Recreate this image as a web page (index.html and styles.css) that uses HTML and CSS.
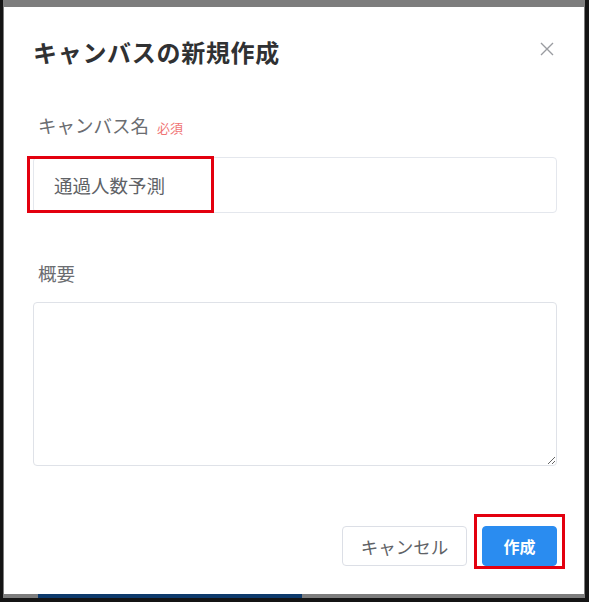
FILE: index.html
```html
<!DOCTYPE html>
<html lang="ja">
<head>
    <meta charset="UTF-8">
    <title>キャンバスの新規作成</title>
    <link rel="stylesheet" href="styles.css">
</head>
<body>
    <div class="screen">
        <div class="backdrop">
            <div class="dialog">
                <div class="dialog-header">
                    <h1>キャンバスの新規作成</h1>
                    <button class="close-btn" aria-label="閉じる">
                        <svg width="14" height="14" viewBox="0 0 14 14">
                            <path d="M1 1 L13 13 M13 1 L1 13" stroke="#9a9ca1" stroke-width="1.4" fill="none"/>
                        </svg>
                    </button>
                </div>

                <div class="field">
                    <label class="field-label">キャンバス名<span class="required">必須</span></label>
                    <div class="input-wrap">
                        <input class="text-input" type="text" value="通過人数予測" readonly>
                        <div class="highlight highlight-input"></div>
                    </div>
                </div>

                <div class="field field-desc">
                    <label class="field-label">概要</label>
                    <textarea class="text-area"></textarea>
                </div>

                <div class="dialog-footer">
                    <button class="btn btn-default">キャンセル</button>
                    <div class="btn-wrap">
                        <button class="btn btn-primary">作成</button>
                        <div class="highlight highlight-btn"></div>
                    </div>
                </div>
            </div>
        </div>
    </div>
</body>
</html>
```

FILE: styles.css
```css
* { margin: 0; padding: 0; box-sizing: border-box; }
body { background: #111; font-family: "Noto Sans CJK JP", "Noto Sans", sans-serif; }
.screen { width: 589px; height: 602px; padding: 0 4px 4px 3px; background: #141414; }
.backdrop { position: relative; height: 100%; background: #7d7d7d; padding: 7px 1px 4px 1px; }
.backdrop::after { content: ""; position: absolute; left: 35px; bottom: 0; width: 264px; height: 4px; background: #0d3a6c; }
.dialog { height: 100%; background: #fff; padding: 0 27px 0 29px; }

.dialog-header { display: flex; align-items: center; justify-content: space-between; padding-top: 27px; height: 62px; }
.dialog-header h1 { font-size: 24px; font-weight: 700; color: #303133; line-height: 34px; letter-spacing: 0.7px; }
.close-btn { border: none; background: none; width: 14px; height: 14px; margin-right: 3px; margin-top: -6px; display: flex; }

.field { margin-top: 44px; }
.field-label { display: block; padding-left: 5px; font-size: 18.5px; line-height: 24px; color: #6b6d71; font-weight: 400; }
.required { font-size: 13px; color: #f07474; margin-left: 8px; }

.input-wrap { position: relative; margin-top: 17px; }
.text-input { display: block; width: 100%; height: 56px; border: 1px solid #e4e7ed; border-radius: 4px; padding: 0 20px; font-family: inherit; font-size: 18.5px; color: #606266; outline: none; }

.field-desc { margin-top: 48px; }
.text-area { display: block; width: 100%; height: 164px; margin-top: 17px; border: 1px solid #dfe2e8; border-radius: 4px; resize: vertical; font-family: inherit; outline: none; }

.dialog-footer { display: flex; justify-content: flex-end; gap: 15px; margin-top: 60px; }
.btn { height: 40px; border-radius: 4px; font-family: inherit; font-size: 17.5px; cursor: pointer; }
.btn-default { width: 125px; background: #fff; border: 1px solid #dcdfe6; color: #606266; }
.btn-wrap { position: relative; }
.btn-primary { width: 75px; background: #2a8cf0; border: 1px solid #2a8cf0; color: #fff; font-weight: 700; font-size: 16px; }

.highlight { position: absolute; border: 3px solid #e3000f; pointer-events: none; }
.highlight-input { left: -6px; top: -1px; width: 187px; height: 57px; }
.highlight-btn { left: -8px; top: -12px; width: 91px; height: 55px; }
```
